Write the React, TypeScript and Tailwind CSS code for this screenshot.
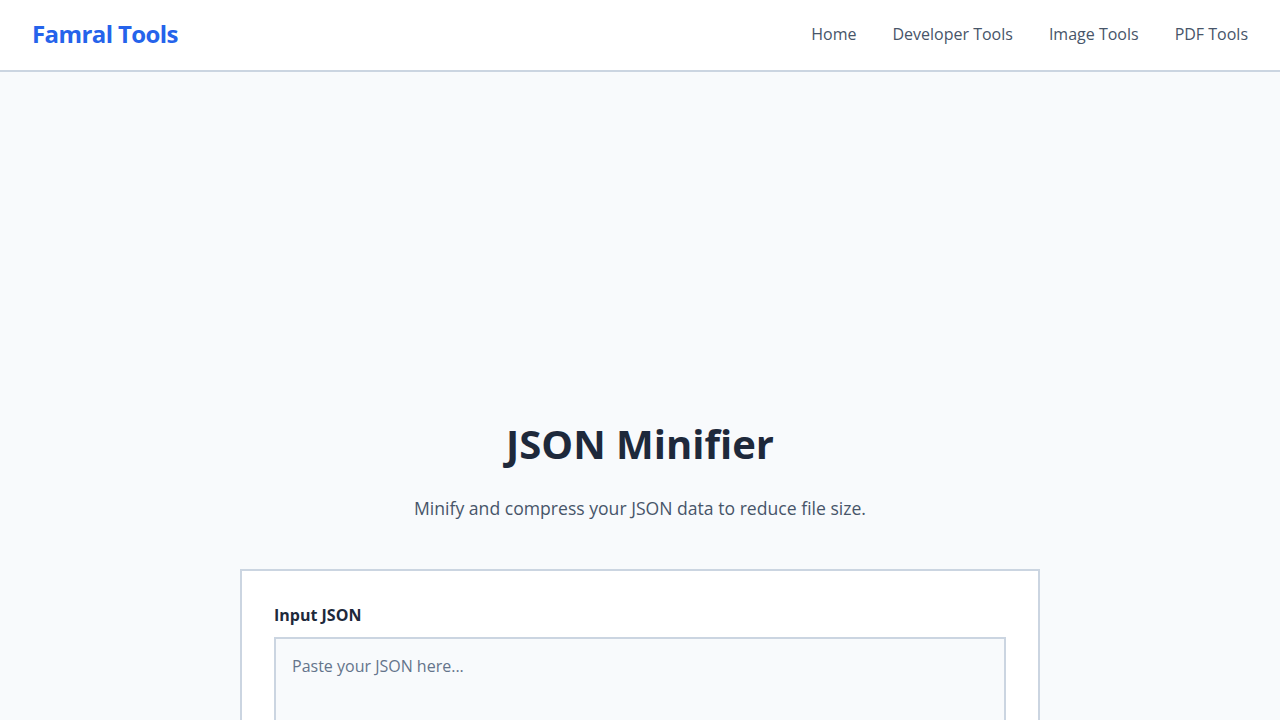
import { useState } from "react";

export default function App() {
  const [input, setInput] = useState("");

  return (
    <div
      className="min-h-screen bg-[#f8fafc] text-[#1e293b]"
      style={{ fontFamily: '"Open Sans", "Noto Sans", sans-serif' }}
    >
      <header className="h-[72px] bg-white border-b-2 border-[#cbd5e1] px-8 pb-[3px] flex items-center justify-between">
        <a href="/" className="text-[24px] font-bold text-[#2563eb] tracking-tight">
          Famral Tools
        </a>
        <nav className="flex items-center gap-9 text-[16px] text-[#475569]">
          <a href="/">Home</a>
          <a href="/developer">Developer Tools</a>
          <a href="/image">Image Tools</a>
          <a href="/pdf">PDF Tools</a>
        </nav>
      </header>

      <main className="max-w-[800px] mx-auto pt-[348px] pb-16">
        <h1 className="text-[40px] leading-[48px] font-bold text-center text-[#1e293b]">
          JSON Minifier
        </h1>
        <p className="mt-[26px] text-[17.6px] leading-[28px] text-center text-[#475569]">
          Minify and compress your JSON data to reduce file size.
        </p>

        <div className="mt-[47px] bg-white border-2 border-[#cbd5e1] p-8">
          <label className="block text-[16px] leading-6 font-bold text-[#1e293b] mb-2.5">
            Input JSON
          </label>
          <textarea
            value={input}
            onChange={(e) => setInput(e.target.value)}
            placeholder="Paste your JSON here..."
            className="w-full h-[240px] bg-[#f8fafc] border-2 border-[#cbd5e1] px-4 pt-[15px] pb-4 text-[16px] leading-6 placeholder:text-[#64748b] outline-none resize-none"
          />
        </div>
      </main>
    </div>
  );
}
